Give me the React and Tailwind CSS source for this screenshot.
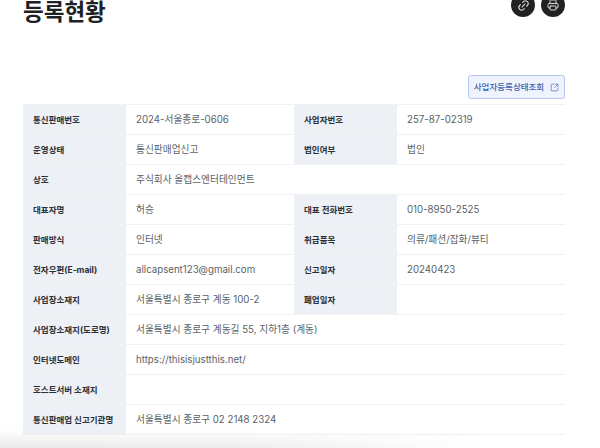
import { Link2, Printer, SquareArrowOutUpRight } from "lucide-react";

const rows = [
  ["통신판매번호", "2024-서울종로-0606", "사업자번호", "257-87-02319"],
  ["운영상태", "통신판매업신고", "법인여부", "법인"],
  ["상호", "주식회사 올캡스엔터테인먼트"],
  ["대표자명", "허승", "대표 전화번호", "010-8950-2525"],
  ["판매방식", "인터넷", "취급품목", "의류/패션/잡화/뷰티"],
  ["전자우편(E-mail)", "allcapsent123@gmail.com", "신고일자", "20240423"],
  ["사업장소재지", "서울특별시 종로구 계동 100-2", "폐업일자", ""],
  ["사업장소재지(도로명)", "서울특별시 종로구 계동길 55, 지하1층 (계동)"],
  ["인터넷도메인", "https://thisisjustthis.net/"],
  ["호스트서버 소재지", ""],
  ["통신판매업 신고기관명", "서울특별시 종로구 02 2148 2324"],
];

function Label({ children }) {
  return (
    <div className="w-[103px] shrink-0 bg-[#edf0f5] pl-[10px] pt-px flex items-center text-[8.5px] font-bold text-[#2b2f36] whitespace-nowrap">
      {children}
    </div>
  );
}

function Value({ children, wide }) {
  return (
    <div className={`${wide ? "flex-1" : "w-[168px] shrink-0"} pl-[10px] pt-px flex items-center text-[9.7px] text-[#5a5f67] whitespace-nowrap`}>
      {children}
    </div>
  );
}

function App() {
  return (
    <div className="relative w-[600px] h-[448px] overflow-hidden bg-white font-['Inter','Noto_Sans_CJK_KR',sans-serif]">
      {/* Header */}
      <div className="flex justify-between items-start pl-[23px] pr-[35px] -mt-[7px]">
        <h1 className="mt-[7px] text-[22.5px] leading-[24px] font-bold text-[#1e2125]">등록현황</h1>
        <div className="flex gap-[6px]">
          <button className="w-[24px] h-[24px] rounded-full bg-[#222222] flex items-center justify-center text-[#d8d8d8]">
            <Link2 size={13} strokeWidth={2} className="-rotate-45" />
          </button>
          <button className="w-[24px] h-[24px] rounded-full bg-[#222222] flex items-center justify-center text-[#d8d8d8]">
            <Printer size={12} strokeWidth={2} />
          </button>
        </div>
      </div>

      {/* 조회 button */}
      <div className="flex justify-end pr-[35px] mt-[51px]">
        <button className="w-[97px] h-[24px] rounded-[3px] border border-[#b4c8f2] bg-[#eff3fe] flex items-center justify-center gap-[6px] text-[8.5px] font-medium text-[#3f63ad] whitespace-nowrap">
          사업자등록상태조회
          <SquareArrowOutUpRight size={9} strokeWidth={1.75} />
        </button>
      </div>

      {/* Table */}
      <div className="mx-[23px] w-[542px] mt-[5px] border-t border-[#f0f1f3] text-left">
        {rows.map((row, i) => (
          <div key={i} className="flex h-[30px] border-b border-[#f0f1f3]">
            <Label>{row[0]}</Label>
            {row.length === 4 ? (
              <>
                <Value>{row[1]}</Value>
                <Label>{row[2]}</Label>
                <Value wide>{row[3]}</Value>
              </>
            ) : (
              <Value wide>{row[1]}</Value>
            )}
          </div>
        ))}
      </div>

      {/* Blurred shadow along the bottom edge */}
      <div className="absolute left-0 bottom-0 w-[480px] h-[18px] bg-gradient-to-r from-[#e9e9e9] via-[#ececec] to-transparent [mask-image:linear-gradient(to_top,black,transparent)]" />
    </div>
  );
}

export default App;
